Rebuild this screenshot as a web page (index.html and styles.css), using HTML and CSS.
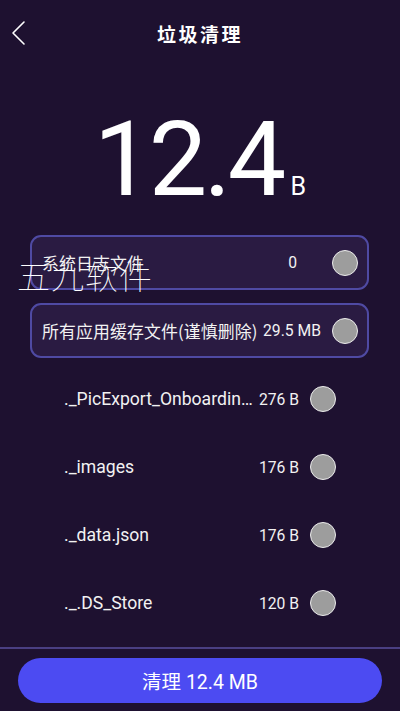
FILE: index.html
```html
<!DOCTYPE html>
<html lang="zh">
<head>
<meta charset="utf-8">
<title>垃圾清理</title>
<link rel="stylesheet" href="styles.css">
</head>
<body>
<div class="app">
  <header class="topbar">
    <svg class="back" width="16" height="26" viewBox="0 0 16 26"><path d="M13 2 L2 13 L13 24" fill="none" stroke="#fff" stroke-width="1.6" stroke-linecap="round" stroke-linejoin="round"/></svg>
    <h1 class="title">垃圾清理</h1>
  </header>

  <section class="hero">
    <span class="hero-num">12.4</span><span class="hero-unit">B</span>
  </section>

  <div class="cards">
    <div class="card">
      <span class="name">系统日志文件</span>
      <span class="value value-short">0</span>
      <span class="check"></span>
    </div>
    <div class="card">
      <span class="name">所有应用缓存文件(谨慎删除)</span>
      <span class="value">29.5 MB</span>
      <span class="check"></span>
    </div>
  </div>

  <ul class="files">
    <li class="file"><span class="name">._PicExport_Onboarding_Template.json</span><span class="value">276 B</span><span class="check"></span></li>
    <li class="file"><span class="name">._images</span><span class="value">176 B</span><span class="check"></span></li>
    <li class="file"><span class="name">._data.json</span><span class="value">176 B</span><span class="check"></span></li>
    <li class="file"><span class="name">._.DS_Store</span><span class="value">120 B</span><span class="check"></span></li>
  </ul>

  <footer class="footer">
    <button class="clean">清理 12.4 MB</button>
  </footer>

  <div class="watermark">五九软件</div>
</div>
</body>
</html>
```

FILE: styles.css
```css
* { box-sizing: border-box; }
html, body { margin: 0; padding: 0; }
body {
  background: #1e1130;
  font-family: Roboto, "Noto Sans CJK SC", sans-serif;
  color: #f2f2f2;
  width: 400px;
  height: 711px;
  overflow: hidden;
}
.app {
  position: relative;
  height: 711px;
  display: flex;
  flex-direction: column;
}
.topbar {
  position: relative;
  height: 66px;
  display: flex;
  align-items: center;
  justify-content: center;
}
.back {
  position: absolute;
  left: 11px;
  top: 20px;
}
.title {
  margin: 0;
  font-size: 19px;
  font-weight: 700;
  letter-spacing: 2.5px;
  color: #fff;
  font-family: "Noto Sans CJK SC", sans-serif;
}
.hero {
  height: 169px;
  padding-top: 42px;
  display: flex;
  justify-content: center;
  align-items: baseline;
  color: #fff;
}
.hero-num {
  font-size: 104px;
  line-height: 1;
  font-weight: 400;
  letter-spacing: -3.5px;
}
.hero-unit {
  font-size: 25px;
  margin-left: 8px;
}
.cards {
  display: flex;
  flex-direction: column;
  gap: 13px;
  padding: 0 31px 0 30px;
}
.card {
  height: 55px;
  border: 2px solid #4f4aa3;
  border-radius: 11px;
  background: #2a1b42;
  display: flex;
  align-items: center;
  padding: 0 9px 0 10px;
}
.name {
  flex: 1;
  min-width: 0;
  white-space: nowrap;
  overflow: hidden;
  text-overflow: ellipsis;
  font-size: 16.5px;
}
.card .name { font-family: "Noto Sans CJK SC", Roboto, sans-serif; font-size: 16.9px; letter-spacing: 0.1px; }
.value {
  flex: none;
  font-size: 15.7px;
  margin: 0 11px 0 3px;
}
.value-short { margin-right: 35px; }
.check {
  flex: none;
  width: 26px;
  height: 26px;
  border-radius: 50%;
  background: #9d9d9d;
  border: 1.5px solid #ececec;
}
.files {
  list-style: none;
  margin: 7px 0 0 0;
  padding: 0;
}
.file {
  height: 68px;
  display: flex;
  align-items: center;
  padding: 0 64px 0 64px;
}
.file .name { font-size: 17.6px; }
.footer {
  margin-top: auto;
  border-top: 2px solid #4a3f82;
  padding: 9px 18px 8px 18px;
}
.clean {
  display: block;
  width: 100%;
  height: 45px;
  border: none;
  border-radius: 23px;
  background: #4c4bf2;
  color: #fff;
  font-family: Roboto, "Noto Sans CJK SC", sans-serif;
  font-size: 19.5px;
}
.watermark {
  position: absolute;
  left: 17px;
  top: 259px;
  font-family: "Noto Sans CJK SC", sans-serif;
  font-weight: 100;
  font-size: 33px;
  line-height: 1;
  letter-spacing: 1px;
  color: #fff;
  pointer-events: none;
}
```
